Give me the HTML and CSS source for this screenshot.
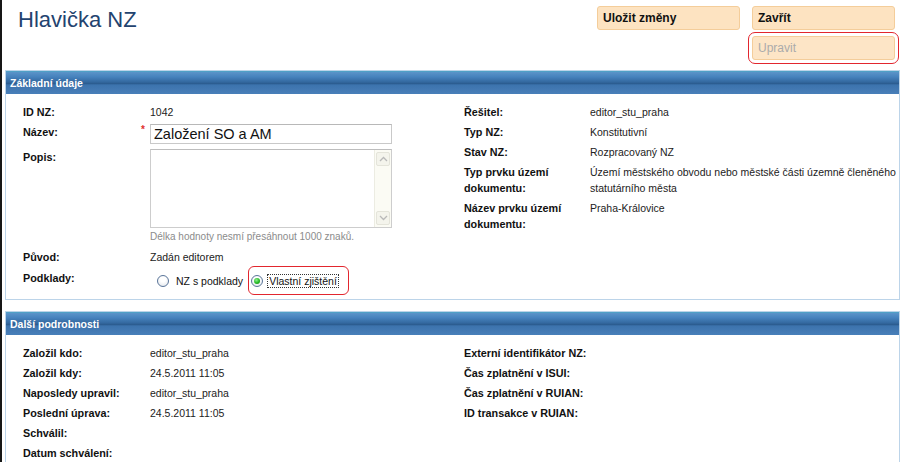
FILE: index.html
```html
<!DOCTYPE html>
<html lang="cs">
<head>
<meta charset="utf-8">
<title>Hlavička NZ</title>
<link rel="stylesheet" href="styles.css">
</head>
<body>
<div class="page">
  <header class="topbar">
    <h1 class="title">Hlavička NZ</h1>
    <div class="actions">
      <button class="btn">Uložit změny</button>
      <button class="btn">Zavřít</button>
      <button class="btn btn-upravit" disabled>Upravit</button>
    </div>
  </header>

  <section class="panel">
    <div class="panel-head">Základní údaje</div>
    <div class="panel-body">
      <div class="col">
        <div class="row"><div class="lbl">ID NZ:</div><div class="val">1042</div></div>
        <div class="row row-input">
          <div class="lbl">Název:<span class="req">*</span></div>
          <div class="val"><div class="input">Založení SO a AM</div></div>
        </div>
        <div class="row row-area">
          <div class="lbl">Popis:</div>
          <div class="val">
            <div class="textarea">
              <div class="scroll">
                <span class="sbtn"><svg width="9" height="6" viewBox="0 0 9 6"><polyline points="1,5 4.5,1.5 8,5" fill="none" stroke="#b9b9b9" stroke-width="1.3"/></svg></span>
                <span class="sbtn"><svg width="9" height="6" viewBox="0 0 9 6"><polyline points="1,1 4.5,4.5 8,1" fill="none" stroke="#b9b9b9" stroke-width="1.3"/></svg></span>
              </div>
            </div>
            <div class="hint">Délka hodnoty nesmí přesáhnout 1000 znaků.</div>
          </div>
        </div>
        <div class="row"><div class="lbl">Původ:</div><div class="val">Zadán editorem</div></div>
        <div class="row row-radio">
          <div class="lbl">Podklady:</div>
          <div class="val radios">
            <span class="radio"></span><span class="rtext">NZ s podklady</span>
            <span class="marked">
              <span class="radio checked"></span><span class="rtext focus">Vlastní zjištění</span>
            </span>
          </div>
        </div>
      </div>
      <div class="col col-right">
        <div class="row"><div class="lbl">Řešitel:</div><div class="val">editor_stu_praha</div></div>
        <div class="row"><div class="lbl">Typ NZ:</div><div class="val">Konstitutivní</div></div>
        <div class="row"><div class="lbl">Stav NZ:</div><div class="val">Rozpracovaný NZ</div></div>
        <div class="row"><div class="lbl">Typ prvku území dokumentu:</div><div class="val">Území městského obvodu nebo městské části územně členěného statutárního města</div></div>
        <div class="row"><div class="lbl">Název prvku území dokumentu:</div><div class="val">Praha-Královice</div></div>
      </div>
    </div>
  </section>

  <section class="panel">
    <div class="panel-head">Další podrobnosti</div>
    <div class="panel-body">
      <div class="col">
        <div class="row"><div class="lbl">Založil kdo:</div><div class="val">editor_stu_praha</div></div>
        <div class="row"><div class="lbl">Založil kdy:</div><div class="val">24.5.2011 11:05</div></div>
        <div class="row"><div class="lbl">Naposledy upravil:</div><div class="val">editor_stu_praha</div></div>
        <div class="row"><div class="lbl">Poslední úprava:</div><div class="val">24.5.2011 11:05</div></div>
        <div class="row"><div class="lbl">Schválil:</div><div class="val"></div></div>
        <div class="row"><div class="lbl">Datum schválení:</div><div class="val"></div></div>
      </div>
      <div class="col col-right">
        <div class="row"><div class="lbl lbl-wide">Externí identifikátor NZ:</div><div class="val"></div></div>
        <div class="row"><div class="lbl lbl-wide">Čas zplatnění v ISUI:</div><div class="val"></div></div>
        <div class="row"><div class="lbl lbl-wide">Čas zplatnění v RUIAN:</div><div class="val"></div></div>
        <div class="row"><div class="lbl lbl-wide">ID transakce v RUIAN:</div><div class="val"></div></div>
      </div>
    </div>
  </section>
</div>
</body>
</html>
```

FILE: styles.css
```css
* { box-sizing: border-box; }
html, body { margin: 0; padding: 0; background: #fff; }
body {
  font-family: "Liberation Sans", Arial, sans-serif;
  color: #222;
  overflow: hidden;
}
.page {
  border-left: 2px solid #161616;
  min-height: 462px;
  padding: 0 3px;
}

/* top bar */
.topbar {
  height: 70px;
  display: flex;
  justify-content: space-between;
  align-items: flex-start;
}
.title {
  margin: 7px 0 0 13px;
  font-size: 22px;
  line-height: 26px;
  font-weight: normal;
  color: #23436f;
}
.actions {
  display: grid;
  grid-template-columns: 143px 143px;
  column-gap: 12px;
  row-gap: 6px;
  margin: 6px 5px 0 0;
}
.btn {
  height: 24px;
  padding: 0 0 0 5px;
  text-align: left;
  font: bold 12px "Liberation Sans", Arial, sans-serif;
  color: #111;
  background: #fde3c1;
  border: 1px solid #f4cd9a;
  border-radius: 3px;
}
.btn-upravit {
  grid-column: 2;
  font-weight: normal;
  color: #ababab;
  background: #fde5c6;
  outline: 1px solid #e2262e;
  outline-offset: 3px;
}

/* panels */
.panel { border: 1px solid #bcd4e9; }
.panel + .panel { margin-top: 11px; }
.panel-head {
  height: 23px;
  line-height: 22px;
  padding-left: 4px;
  color: #fff;
  font-weight: bold;
  font-size: 10.5px;
  background: linear-gradient(to bottom, #5b94c9 0%, #4682bd 22%, #3469a0 45%, #2a5a8d 54%, #3c73ad 58%, #4379b3 80%, #487fb9 100%);
  border-top: 1px solid #4fa0c6;
}
.panel-body {
  display: grid;
  grid-template-columns: 441px 1fr;
  padding: 8px 8px 4px 17px;
}
.row {
  display: flex;
  align-items: flex-start;
  font-size: 10.5px;
  line-height: 16px;
}
.lbl {
  flex: 0 0 127px;
  padding: 2px 4px 2px 0;
  font-weight: bold;
  font-size: 10.8px;
  color: #111;
  position: relative;
}
.col-right .lbl { flex-basis: 126px; }
.col-right .lbl-wide { white-space: nowrap; padding-right: 0; }
.val {
  flex: 1;
  padding: 2px 0;
  color: #222;
  min-height: 20px;
}
.col-right .val { flex: 0 0 310px; }

.req {
  position: absolute;
  right: 5px;
  top: 0;
  color: #e0302c;
  font-size: 10px;
}

/* inputs */
.row-input .val { padding: 2px 0 3px; }
.input {
  width: 242px;
  height: 20px;
  border: 1px solid #c9c9c9;
  border-top-color: #b8b8b8;
  padding: 0 3px;
  font-size: 14.5px;
  line-height: 18px;
  color: #111;
}
.row-area .val { padding: 2px 0 3px; }
.textarea {
  width: 242px;
  height: 79px;
  border: 1px solid #cdcdcd;
  border-top-color: #bdbdbd;
  display: flex;
  justify-content: flex-end;
}
.scroll {
  width: 17px;
  background: #fbfbf4;
  border-left: 1px solid #ecece2;
  display: flex;
  flex-direction: column;
  justify-content: space-between;
  padding: 2px 1px;
}
.sbtn {
  height: 14px;
  border: 1px solid #e4e4da;
  border-radius: 2px;
  background: #f4f4ec;
  display: flex;
  align-items: center;
  justify-content: center;
}
.hint {
  margin-top: 2px;
  font-size: 10px;
  line-height: 14px;
  color: #8b8b8b;
}

/* radios */
.row-radio { margin-top: 1px; }
.radios {
  display: flex;
  align-items: center;
  margin-top: -2px;
  padding: 0;
}
.radio {
  width: 12px;
  height: 12px;
  border-radius: 50%;
  border: 1px solid #5a7599;
  background: radial-gradient(circle at 50% 35%, #ffffff 30%, #dfe3e8 100%);
  margin-left: 7px;
  display: inline-flex;
  align-items: center;
  justify-content: center;
}
.radio.checked { margin-left: 0; }
.radio.checked::after {
  content: "";
  width: 6px;
  height: 6px;
  border-radius: 50%;
  background: radial-gradient(circle at 40% 35%, #8ef28e 0%, #24b724 55%, #128a12 100%);
}
.rtext {
  margin-left: 7px;
  font-size: 10.5px;
  color: #111;
}
.marked {
  display: inline-flex;
  align-items: center;
  height: 29px;
  margin-left: 5px;
  padding: 0 9px 0 2px;
  border: 1px solid #e2262e;
  border-radius: 6px;
}
.rtext.focus {
  margin-left: 4px;
  border: 1px dotted #333;
  padding: 0 1px;
  line-height: 12px;
}
```
